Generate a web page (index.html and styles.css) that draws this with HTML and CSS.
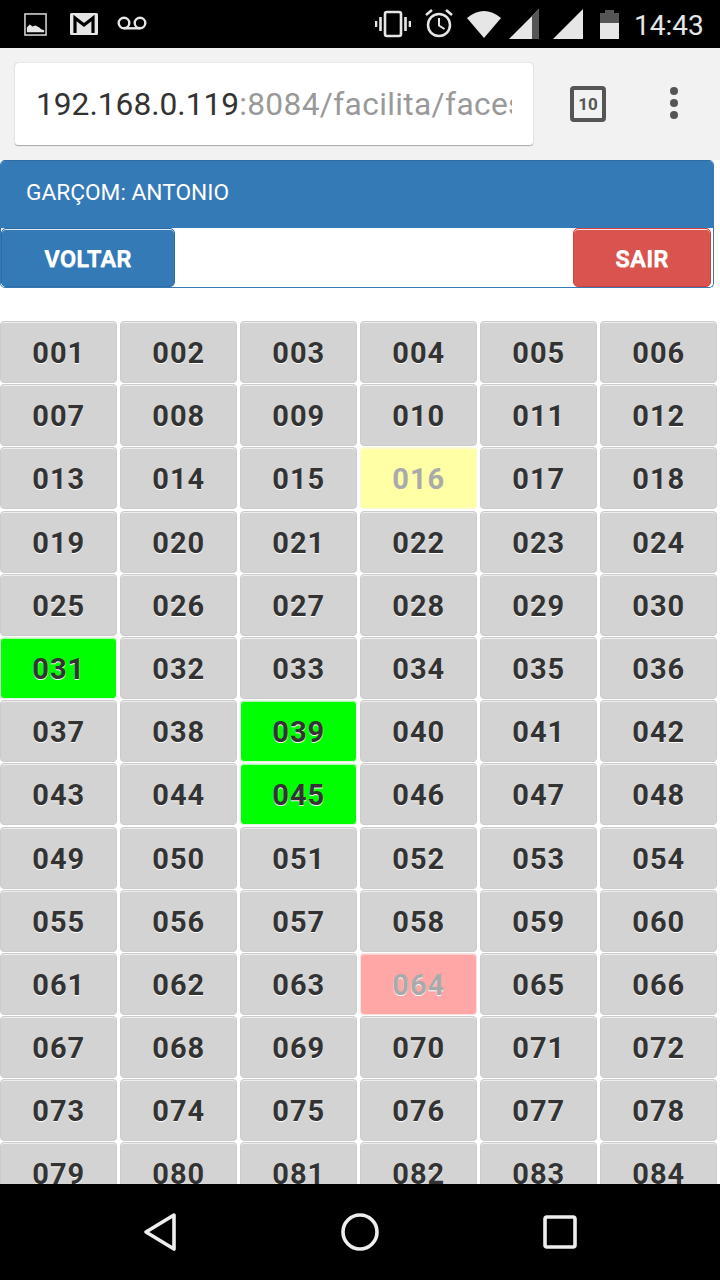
FILE: index.html
```html
<!DOCTYPE html>
<html lang="pt">
<head>
<meta charset="utf-8">
<title>Facilita</title>
<link rel="stylesheet" href="styles.css">
</head>
<body>
<div class="phone">
  <div class="status">
    <div class="status-left">
      <svg class="ic-image" viewBox="0 0 24 24"><rect x="1" y="1" width="22" height="22" fill="none" stroke="#d8d8d8" stroke-width="1.6"/><path d="M3 20v-5l3-3 3 2 3-1 4 2 2 2 3 1v2z" fill="#e6e6e6"/></svg>
      <svg class="ic-mail" viewBox="0 0 28 22"><path d="M1.5 0h25A1.500 1.500 0 0 1 28 1.500v19a1.500 1.500 0 0 1-1.500 1.500h-25A1.500 1.500 0 0 1 0 20.500v-19A1.500 1.500 0 0 1 1.500 0z" fill="#e6e6e6"/><path d="M5 20V5l9 7 9-7v15" fill="none" stroke="#000" stroke-width="3.200"/></svg>
      <svg class="ic-vm" viewBox="0 0 30 14"><circle cx="7" cy="7" r="5.300" fill="none" stroke="#e6e6e6" stroke-width="2.400"/><circle cx="23" cy="7" r="5.300" fill="none" stroke="#e6e6e6" stroke-width="2.400"/><path d="M7 12.300h16" stroke="#e6e6e6" stroke-width="2.400"/></svg>
    </div>
    <div class="status-right">
      <svg class="ic-vib" viewBox="0 0 36 28"><rect x="10" y="2" width="16" height="24" rx="2" fill="none" stroke="#e6e6e6" stroke-width="2.600"/><path d="M5.500 7v14M1 11v6M30.500 7v14M35 11v6" stroke="#e6e6e6" stroke-width="2.600"/></svg>
      <svg class="ic-alarm" viewBox="0 0 28 29"><circle cx="14" cy="16" r="11" fill="none" stroke="#e6e6e6" stroke-width="2.500"/><path d="M14 9v7.500l5.500 3.500" fill="none" stroke="#e6e6e6" stroke-width="2"/><path d="M1 6l6-5M27 6l-6-5" stroke="#e6e6e6" stroke-width="2.500"/></svg>
      <svg class="ic-wifi" viewBox="0 0 34 27"><path d="M0 7Q17-7 34 7L17 27z" fill="#e6e6e6"/></svg>
      <svg class="ic-sig" viewBox="0 0 30 30"><path d="M0 30 30 0v30z" fill="#e6e6e6"/><path d="M23 7l7-7v30h-7z" fill="#555"/></svg>
      <svg class="ic-sig2" viewBox="0 0 30 30"><path d="M0 30 30 0v30z" fill="#e6e6e6"/></svg>
      <svg class="ic-bat" viewBox="0 0 19 29"><path d="M5 0h9v3h5v10H0V3h5z" fill="#555"/><path d="M0 13h19v16H0z" fill="#e6e6e6"/></svg>
      <span class="clock">14:43</span>
    </div>
  </div>
  <div class="toolbar">
    <div class="omnibox"><span class="url"><span class="host">192.168.0.119</span><span class="path">:8084/facilita/faces</span></span></div>
    <div class="tabs">10</div>
    <div class="menu"><i></i><i></i><i></i></div>
  </div>
  <div class="page">
    <div class="panel">
      <div class="panel-head">GARÇOM: ANTONIO</div>
      <div class="panel-body">
        <a class="btn btn-blue">VOLTAR</a>
        <a class="btn btn-red">SAIR</a>
      </div>
    </div>
    <div class="grid">
      <a class="cell">001</a><a class="cell">002</a><a class="cell">003</a><a class="cell">004</a><a class="cell">005</a><a class="cell">006</a>
      <a class="cell">007</a><a class="cell">008</a><a class="cell">009</a><a class="cell">010</a><a class="cell">011</a><a class="cell">012</a>
      <a class="cell">013</a><a class="cell">014</a><a class="cell">015</a><a class="cell yellow">016</a><a class="cell">017</a><a class="cell">018</a>
      <a class="cell">019</a><a class="cell">020</a><a class="cell">021</a><a class="cell">022</a><a class="cell">023</a><a class="cell">024</a>
      <a class="cell">025</a><a class="cell">026</a><a class="cell">027</a><a class="cell">028</a><a class="cell">029</a><a class="cell">030</a>
      <a class="cell green">031</a><a class="cell">032</a><a class="cell">033</a><a class="cell">034</a><a class="cell">035</a><a class="cell">036</a>
      <a class="cell">037</a><a class="cell">038</a><a class="cell green">039</a><a class="cell">040</a><a class="cell">041</a><a class="cell">042</a>
      <a class="cell">043</a><a class="cell">044</a><a class="cell green">045</a><a class="cell">046</a><a class="cell">047</a><a class="cell">048</a>
      <a class="cell">049</a><a class="cell">050</a><a class="cell">051</a><a class="cell">052</a><a class="cell">053</a><a class="cell">054</a>
      <a class="cell">055</a><a class="cell">056</a><a class="cell">057</a><a class="cell">058</a><a class="cell">059</a><a class="cell">060</a>
      <a class="cell">061</a><a class="cell">062</a><a class="cell">063</a><a class="cell pink">064</a><a class="cell">065</a><a class="cell">066</a>
      <a class="cell">067</a><a class="cell">068</a><a class="cell">069</a><a class="cell">070</a><a class="cell">071</a><a class="cell">072</a>
      <a class="cell">073</a><a class="cell">074</a><a class="cell">075</a><a class="cell">076</a><a class="cell">077</a><a class="cell">078</a>
      <a class="cell">079</a><a class="cell">080</a><a class="cell">081</a><a class="cell">082</a><a class="cell">083</a><a class="cell">084</a>
    </div>
  </div>
  <div class="navbar">
    <svg class="nav-back" viewBox="0 0 34 40"><path d="M31 3 3 20l28 17z" fill="none" stroke="#eee" stroke-width="3.600" stroke-linejoin="round"/></svg>
    <svg class="nav-home" viewBox="0 0 38 38"><circle cx="19" cy="19" r="17" fill="none" stroke="#eee" stroke-width="3.600"/></svg>
    <svg class="nav-recent" viewBox="0 0 34 34"><rect x="2" y="2" width="30" height="30" rx="2" fill="none" stroke="#eee" stroke-width="3.600"/></svg>
  </div>
</div>
</body>
</html>
```
FILE: styles.css
```css
* { box-sizing: border-box; }
html, body { margin: 0; padding: 0; background: #fff; }
body { font-family: Roboto, "Liberation Sans", sans-serif; }
.phone { width: 720px; height: 1280px; display: flex; flex-direction: column; overflow: hidden; }

.status { height: 48px; flex: none; background: #000; display: flex; justify-content: space-between; align-items: center; }
.status-left { display: flex; align-items: center; padding-left: 24px; }
.status-right { display: flex; align-items: center; padding-right: 16px; }
.status svg { display: block; flex: none; }
.ic-image { width: 23px; height: 23px; }
.ic-mail { width: 28px; height: 22px; margin-left: 23px; }
.ic-vm { width: 30px; height: 14px; margin-left: 19px; margin-top: -2px; }
.ic-vib { width: 36px; height: 28px; }
.ic-alarm { width: 28px; height: 29px; margin-left: 14px; margin-top: -1px; }
.ic-wifi { width: 34px; height: 27px; margin-left: 14px; }
.ic-sig { width: 30px; height: 30px; margin-left: 8px; }
.ic-sig2 { width: 30px; height: 30px; margin-left: 14px; }
.ic-bat { width: 19px; height: 29px; margin-left: 17px; }
.clock { margin-left: 15px; padding-top: 3px; font-size: 28px; line-height: 48px; color: #e6e6e6; font-weight: 400; width: 70px; white-space: nowrap; }

.toolbar { height: 112px; flex: none; background: #f2f2f2; display: flex; align-items: flex-start; padding: 15px 0 0 15px; }
.omnibox { width: 518px; height: 82px; background: #fff; border-radius: 3px; box-shadow: 0 0 1px #999, 0 1px 1px #aaa; padding: 2px 21px 0 21px; display: flex; align-items: center; }
.url { display: block; width: 476px; overflow: hidden; white-space: nowrap; font-size: 31.700px; line-height: 40px; color: #999; }
.host { color: #333; }
.path { letter-spacing: .35px; }
.tabs { width: 36px; height: 36px; margin: 23px 0 0 37px; border: 4px solid #555; border-radius: 4px; font-size: 17px; line-height: 28px; font-weight: 700; color: #555; text-align: center; }
.menu { margin: 24px 0 0 64px; width: 8px; display: flex; flex-direction: column; gap: 4px; }
.menu i { display: block; width: 8px; height: 8px; border-radius: 50%; background: #555; }

.page { flex: 1; min-height: 0; overflow: hidden; background: #fff; }
.panel { width: 714px; height: 128px; border: 1px solid #337ab7; border-top-color: #2e6da4; border-radius: 5px; overflow: hidden; }
.panel-head { height: 67px; background: #337ab7; color: #fff; font-size: 22.700px; line-height: 64px; padding-left: 25px; }
.panel-body { height: 59px; display: flex; justify-content: space-between; padding-right: 2px; }
.btn { display: flex; align-items: center; justify-content: center; height: 59px; padding-top: 3px; border-radius: 5px; color: #fff; font-size: 24px; font-weight: 700; text-shadow: 0 1px 0 rgba(255,255,255,.5); box-shadow: inset 0 1px 0 rgba(255,255,255,.85); }
.btn-blue { width: 174px; background: #337ab7; border: 1px solid #2e6da4; }
.btn-red { width: 138px; background: #d9534f; border: 1px solid #d43f3a; }

.grid { display: grid; grid-template-columns: repeat(6, 116.500px); column-gap: 3.500px; grid-auto-rows: 62px; row-gap: 1.200px; margin-top: 33px; }
.cell { display: flex; align-items: center; justify-content: center; padding: 2px 0 0 1px; background: #d3d3d3; border: 1px solid #ccc; border-radius: 4px; box-shadow: inset 0 1px 0 #eee; color: #333; font-size: 29px; font-weight: 700; text-shadow: 0 1px 0 #fff; letter-spacing: 1px; }
.yellow { background: #ffffa6; border-color: #fafad8; box-shadow: inset 0 1px 0 #fcfcd0; color: #aaa; text-shadow: none; }
.pink { background: #ffa6a6; border-color: #fbe0e0; box-shadow: inset 0 1px 0 #fcd0d0; color: #aaa; text-shadow: 0 1px 0 #fff; }
.green { background: #00ff00; border-color: #dff8df; box-shadow: inset 0 1px 0 #b0f5b0; }

.navbar { height: 96px; flex: none; background: #000; position: relative; display: flex; align-items: center; padding-left: 143px; }
.navbar svg { display: block; flex: none; }
.nav-back { width: 34px; height: 40px; }
.nav-home { width: 38px; height: 38px; margin-left: 164px; }
.nav-recent { width: 34px; height: 34px; margin-left: 164px; }
```
